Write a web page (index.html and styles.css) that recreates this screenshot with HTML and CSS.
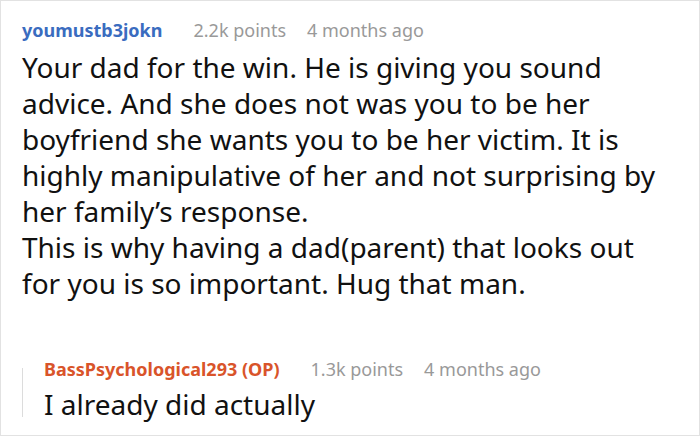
FILE: index.html
```html
<!DOCTYPE html>
<html>
<head>
<meta charset="utf-8">
<link rel="stylesheet" href="styles.css">
</head>
<body>
<div class="card">
  <div class="comment">
    <div class="meta">
      <span class="user">youmustb3jokn</span>
      <span class="info">2.2k points</span>
      <span class="info">4 months ago</span>
    </div>
    <div class="text">Your dad for the win. He is giving you sound advice. And she does not was you to be her boyfriend she wants you to be her victim. It is highly manipulative of her and not surprising by her family’s response.<br>This is why having a dad(parent) that looks out for you is so important. Hug that man.</div>
  </div>
  <div class="reply">
    <div class="meta">
      <span class="user op">BassPsychological293 (OP)</span>
      <span class="info">1.3k points</span>
      <span class="info">4 months ago</span>
    </div>
    <div class="text">I already did actually</div>
  </div>
</div>
</body>
</html>
```

FILE: styles.css
```css
html, body {
  margin: 0;
  padding: 0;
  background: #fff;
}
.card {
  box-sizing: border-box;
  width: 700px;
  height: 436px;
  border: 1px solid #e2e2e2;
  padding: 17px 39px 0 21px;
  font-family: "Noto Sans", "Open Sans", sans-serif;
  overflow: hidden;
}
.meta {
  display: flex;
  gap: 21px;
  font-size: 18px;
  line-height: 24px;
}
.comment .meta {
  margin-bottom: 7px;
}
.reply .meta {
  margin-bottom: 5px;
}
.user {
  font-weight: 700;
  color: #3a6cbf;
  margin-right: 10px;
}
.user.op {
  color: #d9542a;
}
.info {
  color: #999;
}
.text {
  font-size: 28px;
  line-height: 36px;
  color: #111;
}
.reply {
  position: relative;
  margin-top: 56px;
  padding-left: 22px;
}
.reply::before {
  content: "";
  position: absolute;
  left: 0;
  top: 11px;
  bottom: 5px;
  width: 1px;
  background: #dcdcdc;
}
```
